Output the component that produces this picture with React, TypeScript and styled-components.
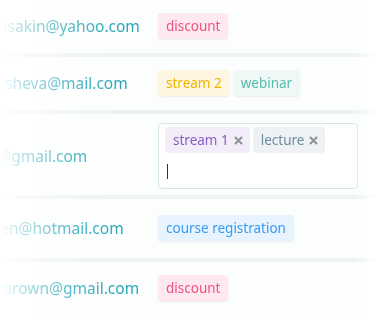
import styled, { createGlobalStyle } from "styled-components";

const GlobalStyle = createGlobalStyle`
  html, body {
    margin: 0;
    padding: 0;
    background: #ffffff;
    overflow: hidden;
  }
  body {
    font-family: "Noto Sans", "Open Sans", sans-serif;
  }
`;

const fade = `linear-gradient(
  to right,
  transparent 32px,
  rgba(0, 0, 0, 0.3) 48px,
  rgba(0, 0, 0, 0.75) 95px,
  #000 150px,
  #000 385px,
  transparent 407px
)`;

const Table = styled.div`
  width: 407px;
  margin-left: -30px;
  background: #fcfefe;
  -webkit-mask-image: ${fade};
  mask-image: ${fade};
`;

const Row = styled.div<{ $top: number; $bottom: number }>`
  display: grid;
  grid-template-columns: 188px 1fr;
  align-items: center;
  padding: ${({ $top }) => $top}px 0 ${({ $bottom }) => $bottom}px;
`;

const Divider = styled.div`
  height: 4px;
  background: #eff2f3;
`;

const Email = styled.div`
  font-size: 15.5px;
  color: #2aa6b9;
  white-space: nowrap;
  overflow: hidden;
`;

const Tags = styled.div`
  display: flex;
  flex-wrap: wrap;
  gap: 3px;
`;

const tagColors = {
  pink: { bg: "#ffe9f0", fg: "#f0527e" },
  yellow: { bg: "#fff6e1", fg: "#f0b200" },
  teal: { bg: "#eff8f6", fg: "#55bca9" },
  blue: { bg: "#e7f4ff", fg: "#3a9bef" },
  purple: { bg: "#f2edf8", fg: "#8a5ccb" },
  gray: { bg: "#eef2f5", fg: "#6d8e9f" },
};

type TagColor = keyof typeof tagColors;

const Tag = styled.span<{ $color: TagColor }>`
  display: inline-flex;
  align-items: center;
  gap: 5px;
  height: 26px;
  padding: 0 8px;
  border-radius: 4px;
  font-size: 13.5px;
  line-height: 26px;
  background: ${({ $color }) => tagColors[$color].bg};
  color: ${({ $color }) => tagColors[$color].fg};
  box-shadow: 0 1px 2px rgba(0, 0, 0, 0.07);
  white-space: nowrap;
`;

const InputTag = styled(Tag)`
  box-shadow: none;
  padding: 0 7px 0 8px;
`;

const TagInput = styled.div`
  box-sizing: border-box;
  width: 200px;
  height: 66px;
  padding: 3px 6px;
  border: 1px solid #d6e7e4;
  border-radius: 4px;
  background: #ffffff;
  display: flex;
  flex-direction: column;
  gap: 11px;
`;

const Cursor = styled.span`
  display: block;
  width: 1px;
  height: 15px;
  margin-left: 2px;
  background: #333;
`;

const RemoveIcon = () => (
  <svg width="9" height="9" viewBox="0 0 9 9">
    <path d="M1.5 1.5 L7.5 7.5 M7.5 1.5 L1.5 7.5" stroke="#8c8f93" strokeWidth="2" strokeLinecap="round" />
  </svg>
);

export default function App() {
  return (
    <>
      <GlobalStyle />
      <Table>
        <Row $top={13} $bottom={14}>
          <Email>m.bosakin@yahoo.com</Email>
          <Tags>
            <Tag $color="pink">discount</Tag>
          </Tags>
        </Row>
        <Divider />
        <Row $top={13} $bottom={14}>
          <Email>ari.lysheva@mail.com</Email>
          <Tags>
            <Tag $color="yellow">stream 2</Tag>
            <Tag $color="teal">webinar</Tag>
          </Tags>
        </Row>
        <Divider />
        <Row $top={9} $bottom={6}>
          <Email>nko@gmail.com</Email>
          <TagInput>
            <Tags>
              <InputTag $color="purple">
                stream 1 <RemoveIcon />
              </InputTag>
              <InputTag $color="gray">
                lecture <RemoveIcon />
              </InputTag>
            </Tags>
            <Cursor />
          </TagInput>
        </Row>
        <Divider />
        <Row $top={16} $bottom={17}>
          <Email>o.allen@hotmail.com</Email>
          <Tags>
            <Tag $color="blue">course registration</Tag>
          </Tags>
        </Row>
        <Divider />
        <Row $top={13} $bottom={14}>
          <Email>jack.brown@gmail.com</Email>
          <Tags>
            <Tag $color="pink">discount</Tag>
          </Tags>
        </Row>
      </Table>
    </>
  );
}
